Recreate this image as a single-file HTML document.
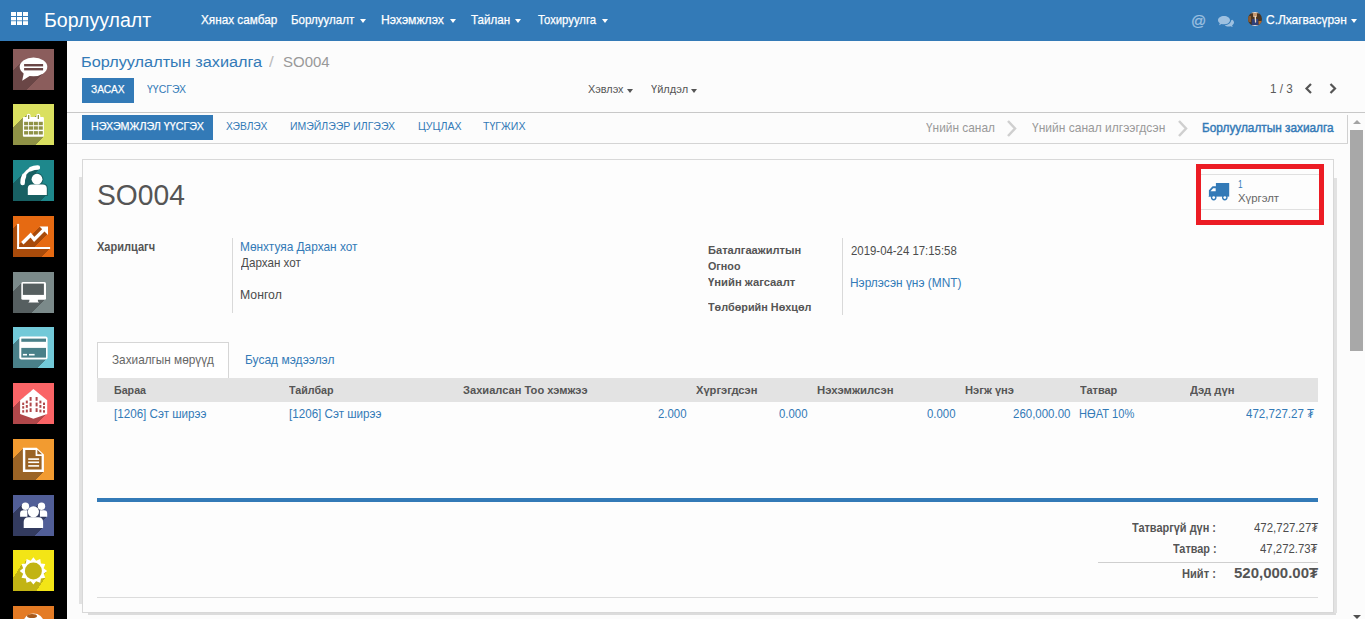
<!DOCTYPE html>
<html><head><meta charset="utf-8">
<style>
*{margin:0;padding:0;box-sizing:border-box}
html,body{width:1365px;height:619px;overflow:hidden;background:#fcfcfc;font-family:"Liberation Sans",sans-serif}
.a{position:absolute}
.t{position:absolute;white-space:nowrap;line-height:1;transform-origin:0 0;-webkit-text-stroke:0.25px currentColor}
#nav{left:0;top:0;width:1365px;height:41px;background:#337ab7}
#side{left:0;top:41px;width:67px;height:578px;background:#000}
.ic{position:absolute;left:13px;width:41px;height:41px;overflow:hidden}
.ic svg{position:absolute;left:0;top:0}
.caret{position:absolute;width:0;height:0;border-left:3.5px solid transparent;border-right:3.5px solid transparent;border-top:4px solid #fff}
.hl{position:absolute;height:1px;background:#cfcfcf}
.vl{position:absolute;width:1px;background:#d9d9d9}
</style></head><body>
<div class="a" id="nav"></div>
<div class="a" id="side"></div>

<!-- grid icon -->
<svg class="a" style="left:11px;top:12px" width="17" height="13" viewBox="0 0 17 13">
<g fill="#fff">
<rect x="0" y="0" width="5" height="4"/><rect x="6" y="0" width="5" height="4"/><rect x="12" y="0" width="5" height="4"/>
<rect x="0" y="5" width="5" height="3.4"/><rect x="6" y="5" width="5" height="3.4"/><rect x="12" y="5" width="5" height="3.4"/>
<rect x="0" y="9.2" width="5" height="3.8"/><rect x="6" y="9.2" width="5" height="3.8"/><rect x="12" y="9.2" width="5" height="3.8"/>
</g></svg>

<!-- nav carets -->
<div class="caret" style="left:360px;top:19px"></div>
<div class="caret" style="left:449.5px;top:19px"></div>
<div class="caret" style="left:514.5px;top:19px"></div>
<div class="caret" style="left:602px;top:19px"></div>
<div class="caret" style="left:1351px;top:19px"></div>

<!-- @ and chat -->
<div class="t" style="left:1191px;top:13px;font-size:15px;color:#9dc0e0">@</div>
<svg class="a" style="left:1218px;top:16px" width="16" height="11" viewBox="0 0 16 11">
<path fill="#9dc0e0" d="M6 0C2.7 0 0 1.8 0 4.2c0 1.2.7 2.2 1.8 3L1 9.3l2.6-1.4c.8.3 1.6.4 2.4.4 3.3 0 6-1.8 6-4.1S9.3 0 6 0z"/>
<path fill="#9dc0e0" d="M13 4.5c0 2.6-2.8 4.6-6.3 4.7.9.9 2.3 1.3 3.8 1.3.6 0 1.2-.1 1.8-.3L14.7 11l-.6-1.8c1.1-.6 1.9-1.6 1.9-2.7 0-1.1-.7-2-1.8-2.7z"/>
</svg>
<!-- avatar -->
<svg class="a" style="left:1248px;top:12px" width="14" height="14" viewBox="0 0 14 14">
<defs><clipPath id="av"><circle cx="7" cy="7" r="7"/></clipPath></defs>
<g clip-path="url(#av)"><rect width="14" height="14" fill="#4a3622"/>
<rect x="0" y="4" width="3" height="6" fill="#8a5a30"/><rect x="10.5" y="9" width="3.5" height="4" fill="#b86a28"/>
<rect x="3" y="0" width="8" height="1.2" fill="#e8e4e0"/>
<rect x="5" y="1" width="4" height="4" fill="#c89a70"/>
<path d="M3.5 14 L4 7 L10 7 L10.5 14Z" fill="#2f3f78"/>
<path d="M6.5 4 L8 4 L8.2 10 L7 11Z" fill="#e6d8c8"/>
<rect x="3" y="13" width="8" height="1" fill="#e0e0e0"/></g>
</svg>

<!-- control panel -->
<div class="a" style="left:82px;top:78px;width:52px;height:25px;background:#337ab7"></div>
<div class="caret" style="left:627px;top:88.5px;border-top-color:#555"></div>
<div class="caret" style="left:691px;top:88.5px;border-top-color:#555"></div>
<svg class="a" style="left:1304px;top:83px" width="34" height="11" viewBox="0 0 34 11">
<path d="M7 1 L2.5 5.5 L7 10" stroke="#555" stroke-width="2.2" fill="none"/>
<path d="M26.5 1 L31 5.5 L26.5 10" stroke="#555" stroke-width="2.2" fill="none"/>
</svg>
<div class="hl" style="left:67px;top:112px;width:1298px;background:#c8c8c8"></div>

<!-- statusbar -->
<div class="a" style="left:82px;top:115px;width:131px;height:25px;background:#337ab7"></div>
<svg class="a" style="left:1006px;top:120px" width="12" height="17" viewBox="0 0 12 17">
<path d="M2 1 L9 8.5 L2 16" stroke="#cfcfcf" stroke-width="2.5" fill="none"/></svg>
<svg class="a" style="left:1177px;top:120px" width="12" height="17" viewBox="0 0 12 17">
<path d="M2 1 L9 8.5 L2 16" stroke="#cfcfcf" stroke-width="2.5" fill="none"/></svg>
<div class="vl" style="left:1347px;top:115px;height:28px;background:#d0d0d0"></div>
<div class="hl" style="left:67px;top:143px;width:1281px;background:#d4d4d4"></div>

<!-- scrollbar -->
<div class="a" style="left:1348px;top:113px;width:17px;height:506px;background:#fcfcfc"></div>
<div class="a" style="left:1350px;top:130px;width:13px;height:221px;background:#a8a8a8"></div>
<div class="a" style="left:1353px;top:120px;width:0;height:0;border-left:4px solid transparent;border-right:4px solid transparent;border-bottom:4px solid #a3a3a3"></div>
<div class="a" style="left:1353px;top:615px;width:0;height:0;border-left:4px solid transparent;border-right:4px solid transparent;border-top:4px solid #505050"></div>

<!-- sheet -->
<div class="a" style="left:79px;top:177px;width:4px;height:427px;background:#e2e2e2"></div>
<div class="a" style="left:88px;top:612px;width:1248px;height:3px;background:#dcdcdc"></div>
<div class="a" style="left:1333px;top:178px;width:4px;height:435px;background:#e2e2e2"></div>
<div class="a" style="left:82px;top:159px;width:1252px;height:454px;background:#fdfdfd;border:1px solid #d8d8d8"></div>

<!-- smart button -->
<div class="hl" style="left:1201px;top:174px;width:118px;background:#e0e0e0"></div>
<div class="hl" style="left:1201px;top:209px;width:118px;background:#e0e0e0"></div>
<svg class="a" style="left:1208px;top:183px" width="22" height="18" viewBox="0 0 22 18">
<g fill="#337ab7">
<rect x="7.9" y="0" width="13.3" height="13.6"/>
<path d="M0.2 13.7 L0.9 13.2 L0.9 7.2 L4.6 3.3 L8.2 3.3 L8.2 13.7Z"/>
<circle cx="5.7" cy="14.6" r="2.8"/><circle cx="16.8" cy="14.6" r="2.8"/>
</g>
<circle cx="5.7" cy="14.6" r="1.4" fill="#fff"/><circle cx="16.8" cy="14.6" r="1.4" fill="#fff"/>
<path d="M2.5 8.2 L5.2 5.2 L7.7 5.2 L7.7 8.2Z" fill="#fff"/>
</svg>
<!-- red annotation -->
<div class="a" style="left:1196px;top:164px;width:128px;height:61px;border:5px solid #ec1c24"></div>

<!-- form separators -->
<div class="vl" style="left:232px;top:238px;height:75px"></div>
<div class="vl" style="left:842px;top:238px;height:77px"></div>

<!-- notebook -->
<div class="a" style="left:97px;top:342px;width:132px;height:36px;background:#fff;border:1px solid #d6d6d6;border-bottom:none"></div>
<div class="a" style="left:97px;top:378px;width:1221px;height:24px;background:#e3e3e3"></div>
<div class="a" style="left:97px;top:498px;width:1221px;height:4px;background:#337ab7"></div>
<div class="hl" style="left:1098px;top:562px;width:220px;background:#cfcfcf"></div>
<div class="hl" style="left:97px;top:597px;width:1221px;background:#dcdcdc"></div>

<!-- sidebar icons -->
<!--ICONS--><div class="ic" style="top:49px"><svg width="41" height="41" viewBox="0 0 41 41"><defs><g id="s0"><ellipse cx="20.5" cy="17.8" rx="13.8" ry="9.4"/><path d="M11 23 L9.2 31.7 L19 25.5Z"/></g></defs><rect width="41" height="41" fill="#8b5d5c"/><g fill="#6a4646" color="#6a4646" shape-rendering="crispEdges"><use href="#s0" x="-1.00" y="1"/><use href="#s0" x="-2.00" y="2"/><use href="#s0" x="-3.00" y="3"/><use href="#s0" x="-4.00" y="4"/><use href="#s0" x="-5.00" y="5"/><use href="#s0" x="-6.00" y="6"/><use href="#s0" x="-7.00" y="7"/><use href="#s0" x="-8.00" y="8"/><use href="#s0" x="-9.00" y="9"/><use href="#s0" x="-10.00" y="10"/><use href="#s0" x="-11.00" y="11"/><use href="#s0" x="-12.00" y="12"/><use href="#s0" x="-13.00" y="13"/><use href="#s0" x="-14.00" y="14"/><use href="#s0" x="-15.00" y="15"/><use href="#s0" x="-16.00" y="16"/><use href="#s0" x="-17.00" y="17"/><use href="#s0" x="-18.00" y="18"/><use href="#s0" x="-19.00" y="19"/><use href="#s0" x="-20.00" y="20"/><use href="#s0" x="-21.00" y="21"/><use href="#s0" x="-22.00" y="22"/><use href="#s0" x="-23.00" y="23"/><use href="#s0" x="-24.00" y="24"/><use href="#s0" x="-25.00" y="25"/><use href="#s0" x="-26.00" y="26"/><use href="#s0" x="-27.00" y="27"/><use href="#s0" x="-28.00" y="28"/><use href="#s0" x="-29.00" y="29"/><use href="#s0" x="-30.00" y="30"/><use href="#s0" x="-31.00" y="31"/><use href="#s0" x="-32.00" y="32"/><use href="#s0" x="-33.00" y="33"/><use href="#s0" x="-34.00" y="34"/><use href="#s0" x="-35.00" y="35"/><use href="#s0" x="-36.00" y="36"/><use href="#s0" x="-37.00" y="37"/><use href="#s0" x="-38.00" y="38"/><use href="#s0" x="-39.00" y="39"/><use href="#s0" x="-40.00" y="40"/><use href="#s0" x="-41.00" y="41"/></g><g fill="#fff" color="#fff"><ellipse cx="20.5" cy="17.8" rx="13.8" ry="9.4"/><path d="M11 23 L9.2 31.7 L19 25.5Z"/></g><g fill="#6a4646"><rect x="11.1" y="15" width="19" height="2.4"/><rect x="11.1" y="19" width="19" height="2.4"/></g><g fill="#fff"></g></svg></div>
<div class="ic" style="top:104px"><svg width="41" height="41" viewBox="0 0 41 41"><defs><g id="s1"><rect x="9.9" y="13" width="21" height="19.8" rx="1"/><rect x="13.6" y="9.7" width="4" height="6.1" rx="2"/><rect x="23.3" y="9.7" width="4" height="6.1" rx="2"/></g></defs><rect width="41" height="41" fill="#dae060"/><g fill="#8f9246" color="#8f9246" shape-rendering="crispEdges"><use href="#s1" x="-1.00" y="1"/><use href="#s1" x="-2.00" y="2"/><use href="#s1" x="-3.00" y="3"/><use href="#s1" x="-4.00" y="4"/><use href="#s1" x="-5.00" y="5"/><use href="#s1" x="-6.00" y="6"/><use href="#s1" x="-7.00" y="7"/><use href="#s1" x="-8.00" y="8"/><use href="#s1" x="-9.00" y="9"/><use href="#s1" x="-10.00" y="10"/><use href="#s1" x="-11.00" y="11"/><use href="#s1" x="-12.00" y="12"/><use href="#s1" x="-13.00" y="13"/><use href="#s1" x="-14.00" y="14"/><use href="#s1" x="-15.00" y="15"/><use href="#s1" x="-16.00" y="16"/><use href="#s1" x="-17.00" y="17"/><use href="#s1" x="-18.00" y="18"/><use href="#s1" x="-19.00" y="19"/><use href="#s1" x="-20.00" y="20"/><use href="#s1" x="-21.00" y="21"/><use href="#s1" x="-22.00" y="22"/><use href="#s1" x="-23.00" y="23"/><use href="#s1" x="-24.00" y="24"/><use href="#s1" x="-25.00" y="25"/><use href="#s1" x="-26.00" y="26"/><use href="#s1" x="-27.00" y="27"/><use href="#s1" x="-28.00" y="28"/><use href="#s1" x="-29.00" y="29"/><use href="#s1" x="-30.00" y="30"/><use href="#s1" x="-31.00" y="31"/><use href="#s1" x="-32.00" y="32"/><use href="#s1" x="-33.00" y="33"/><use href="#s1" x="-34.00" y="34"/><use href="#s1" x="-35.00" y="35"/><use href="#s1" x="-36.00" y="36"/><use href="#s1" x="-37.00" y="37"/><use href="#s1" x="-38.00" y="38"/><use href="#s1" x="-39.00" y="39"/><use href="#s1" x="-40.00" y="40"/><use href="#s1" x="-41.00" y="41"/></g><g fill="#fff" color="#fff"><rect x="9.9" y="13" width="21" height="19.8" rx="1"/><rect x="13.6" y="9.7" width="4" height="6.1" rx="2"/><rect x="23.3" y="9.7" width="4" height="6.1" rx="2"/></g><g fill="#8f9246"><rect x="11.1" y="17.8" width="4.1" height="3.4"/><rect x="11.1" y="22.3" width="4.1" height="3.4"/><rect x="11.1" y="27.1" width="4.1" height="3.4"/><rect x="16" y="17.8" width="4.1" height="3.4"/><rect x="16" y="22.3" width="4.1" height="3.4"/><rect x="16" y="27.1" width="4.1" height="3.4"/><rect x="20.8" y="17.8" width="4.1" height="3.4"/><rect x="20.8" y="22.3" width="4.1" height="3.4"/><rect x="20.8" y="27.1" width="4.1" height="3.4"/><rect x="25.7" y="17.8" width="4.1" height="3.4"/><rect x="25.7" y="22.3" width="4.1" height="3.4"/><rect x="25.7" y="27.1" width="4.1" height="3.4"/><rect x="15" y="11" width="1.3" height="4"/><rect x="24.7" y="11" width="1.3" height="4"/></g><g fill="#fff"></g></svg></div>
<div class="ic" style="top:160px"><svg width="41" height="41" viewBox="0 0 41 41"><defs><g id="s2"><g fill="none" stroke="currentColor" stroke-linecap="round"><path d="M9.7 22 A14.3 14.3 0 0 1 25.25 7.75" stroke-width="3"/><path d="M9.6 23 A14.3 14.3 0 0 1 11.04 15.96" stroke-width="4.6"/><path d="M17.96 9.04 A14.3 14.3 0 0 1 24.8 7.5" stroke-width="4.6"/></g><circle cx="24" cy="19.2" r="5.4"/><path d="M14.8 35 L14.8 28.5 Q14.8 24.5 19 24.5 L29.6 24.5 Q33.8 24.5 33.8 28.5 L33.8 35Z"/></g></defs><rect width="41" height="41" fill="#1e888c"/><g fill="#186063" color="#186063" shape-rendering="crispEdges"><use href="#s2" x="-1.00" y="1"/><use href="#s2" x="-2.00" y="2"/><use href="#s2" x="-3.00" y="3"/><use href="#s2" x="-4.00" y="4"/><use href="#s2" x="-5.00" y="5"/><use href="#s2" x="-6.00" y="6"/><use href="#s2" x="-7.00" y="7"/><use href="#s2" x="-8.00" y="8"/><use href="#s2" x="-9.00" y="9"/><use href="#s2" x="-10.00" y="10"/><use href="#s2" x="-11.00" y="11"/><use href="#s2" x="-12.00" y="12"/><use href="#s2" x="-13.00" y="13"/><use href="#s2" x="-14.00" y="14"/><use href="#s2" x="-15.00" y="15"/><use href="#s2" x="-16.00" y="16"/><use href="#s2" x="-17.00" y="17"/><use href="#s2" x="-18.00" y="18"/><use href="#s2" x="-19.00" y="19"/><use href="#s2" x="-20.00" y="20"/><use href="#s2" x="-21.00" y="21"/><use href="#s2" x="-22.00" y="22"/><use href="#s2" x="-23.00" y="23"/><use href="#s2" x="-24.00" y="24"/><use href="#s2" x="-25.00" y="25"/><use href="#s2" x="-26.00" y="26"/><use href="#s2" x="-27.00" y="27"/><use href="#s2" x="-28.00" y="28"/><use href="#s2" x="-29.00" y="29"/><use href="#s2" x="-30.00" y="30"/><use href="#s2" x="-31.00" y="31"/><use href="#s2" x="-32.00" y="32"/><use href="#s2" x="-33.00" y="33"/><use href="#s2" x="-34.00" y="34"/><use href="#s2" x="-35.00" y="35"/><use href="#s2" x="-36.00" y="36"/><use href="#s2" x="-37.00" y="37"/><use href="#s2" x="-38.00" y="38"/><use href="#s2" x="-39.00" y="39"/><use href="#s2" x="-40.00" y="40"/><use href="#s2" x="-41.00" y="41"/></g><g fill="#fff" color="#fff"><g fill="none" stroke="currentColor" stroke-linecap="round"><path d="M9.7 22 A14.3 14.3 0 0 1 25.25 7.75" stroke-width="3"/><path d="M9.6 23 A14.3 14.3 0 0 1 11.04 15.96" stroke-width="4.6"/><path d="M17.96 9.04 A14.3 14.3 0 0 1 24.8 7.5" stroke-width="4.6"/></g><circle cx="24" cy="19.2" r="5.4"/><path d="M14.8 35 L14.8 28.5 Q14.8 24.5 19 24.5 L29.6 24.5 Q33.8 24.5 33.8 28.5 L33.8 35Z"/></g><g fill="#186063"><circle cx="24" cy="19.2" r="6.4"/><path d="M13.8 36 L13.8 28.5 Q13.8 23.5 19 23.5 L29.6 23.5 Q34.8 23.5 34.8 28.5 L34.8 36Z"/></g><g fill="#fff"><circle cx="24" cy="19.2" r="5.4"/><path d="M14.8 35 L14.8 28.5 Q14.8 24.5 19 24.5 L29.6 24.5 Q33.8 24.5 33.8 28.5 L33.8 35Z"/></g></svg></div>
<div class="ic" style="top:216px"><svg width="41" height="41" viewBox="0 0 41 41"><defs><g id="s3"><rect x="4.1" y="7.9" width="2" height="25.1"/><rect x="4.1" y="31" width="33" height="2"/><path d="M9.3 27.3 L17.6 19 L21.2 23.4 L31.5 13.1" stroke="currentColor" stroke-width="3.4" fill="none"/><path d="M26.5 10.4 L35 10.4 L35 18.9Z"/></g></defs><rect width="41" height="41" fill="#e66a12"/><g fill="#a84b0b" color="#a84b0b" shape-rendering="crispEdges"><use href="#s3" x="-1.00" y="1"/><use href="#s3" x="-2.00" y="2"/><use href="#s3" x="-3.00" y="3"/><use href="#s3" x="-4.00" y="4"/><use href="#s3" x="-5.00" y="5"/><use href="#s3" x="-6.00" y="6"/><use href="#s3" x="-7.00" y="7"/><use href="#s3" x="-8.00" y="8"/><use href="#s3" x="-9.00" y="9"/><use href="#s3" x="-10.00" y="10"/><use href="#s3" x="-11.00" y="11"/><use href="#s3" x="-12.00" y="12"/><use href="#s3" x="-13.00" y="13"/><use href="#s3" x="-14.00" y="14"/><use href="#s3" x="-15.00" y="15"/><use href="#s3" x="-16.00" y="16"/><use href="#s3" x="-17.00" y="17"/><use href="#s3" x="-18.00" y="18"/><use href="#s3" x="-19.00" y="19"/><use href="#s3" x="-20.00" y="20"/><use href="#s3" x="-21.00" y="21"/><use href="#s3" x="-22.00" y="22"/><use href="#s3" x="-23.00" y="23"/><use href="#s3" x="-24.00" y="24"/><use href="#s3" x="-25.00" y="25"/><use href="#s3" x="-26.00" y="26"/><use href="#s3" x="-27.00" y="27"/><use href="#s3" x="-28.00" y="28"/><use href="#s3" x="-29.00" y="29"/><use href="#s3" x="-30.00" y="30"/><use href="#s3" x="-31.00" y="31"/><use href="#s3" x="-32.00" y="32"/><use href="#s3" x="-33.00" y="33"/><use href="#s3" x="-34.00" y="34"/><use href="#s3" x="-35.00" y="35"/><use href="#s3" x="-36.00" y="36"/><use href="#s3" x="-37.00" y="37"/><use href="#s3" x="-38.00" y="38"/><use href="#s3" x="-39.00" y="39"/><use href="#s3" x="-40.00" y="40"/><use href="#s3" x="-41.00" y="41"/></g><g fill="#fff" color="#fff"><rect x="4.1" y="7.9" width="2" height="25.1"/><rect x="4.1" y="31" width="33" height="2"/><path d="M9.3 27.3 L17.6 19 L21.2 23.4 L31.5 13.1" stroke="currentColor" stroke-width="3.4" fill="none"/><path d="M26.5 10.4 L35 10.4 L35 18.9Z"/></g><g fill="#a84b0b"></g><g fill="#fff"></g></svg></div>
<div class="ic" style="top:272px"><svg width="41" height="41" viewBox="0 0 41 41"><defs><g id="s4"><rect x="8.3" y="10" width="24.7" height="17.7" rx="1.5"/><path d="M16.4 27 L24.9 27 L24.9 29.3 L26 30.6 L15.3 30.6 L16.4 29.3Z"/></g></defs><rect width="41" height="41" fill="#7b8a8a"/><g fill="#565f60" color="#565f60" shape-rendering="crispEdges"><use href="#s4" x="-1.00" y="1"/><use href="#s4" x="-2.00" y="2"/><use href="#s4" x="-3.00" y="3"/><use href="#s4" x="-4.00" y="4"/><use href="#s4" x="-5.00" y="5"/><use href="#s4" x="-6.00" y="6"/><use href="#s4" x="-7.00" y="7"/><use href="#s4" x="-8.00" y="8"/><use href="#s4" x="-9.00" y="9"/><use href="#s4" x="-10.00" y="10"/><use href="#s4" x="-11.00" y="11"/><use href="#s4" x="-12.00" y="12"/><use href="#s4" x="-13.00" y="13"/><use href="#s4" x="-14.00" y="14"/><use href="#s4" x="-15.00" y="15"/><use href="#s4" x="-16.00" y="16"/><use href="#s4" x="-17.00" y="17"/><use href="#s4" x="-18.00" y="18"/><use href="#s4" x="-19.00" y="19"/><use href="#s4" x="-20.00" y="20"/><use href="#s4" x="-21.00" y="21"/><use href="#s4" x="-22.00" y="22"/><use href="#s4" x="-23.00" y="23"/><use href="#s4" x="-24.00" y="24"/><use href="#s4" x="-25.00" y="25"/><use href="#s4" x="-26.00" y="26"/><use href="#s4" x="-27.00" y="27"/><use href="#s4" x="-28.00" y="28"/><use href="#s4" x="-29.00" y="29"/><use href="#s4" x="-30.00" y="30"/><use href="#s4" x="-31.00" y="31"/><use href="#s4" x="-32.00" y="32"/><use href="#s4" x="-33.00" y="33"/><use href="#s4" x="-34.00" y="34"/><use href="#s4" x="-35.00" y="35"/><use href="#s4" x="-36.00" y="36"/><use href="#s4" x="-37.00" y="37"/><use href="#s4" x="-38.00" y="38"/><use href="#s4" x="-39.00" y="39"/><use href="#s4" x="-40.00" y="40"/><use href="#s4" x="-41.00" y="41"/></g><g fill="#fff" color="#fff"><rect x="8.3" y="10" width="24.7" height="17.7" rx="1.5"/><path d="M16.4 27 L24.9 27 L24.9 29.3 L26 30.6 L15.3 30.6 L16.4 29.3Z"/></g><g fill="#565f60"><rect x="9.9" y="11.6" width="21" height="11.3"/></g><g fill="#fff"></g></svg></div>
<div class="ic" style="top:327px"><svg width="41" height="41" viewBox="0 0 41 41"><defs><g id="s5"><rect x="6.3" y="9.5" width="28.3" height="23.1" rx="2"/></g></defs><rect width="41" height="41" fill="#72c9d8"/><g fill="#4a8089" color="#4a8089" shape-rendering="crispEdges"><use href="#s5" x="-1.00" y="1"/><use href="#s5" x="-2.00" y="2"/><use href="#s5" x="-3.00" y="3"/><use href="#s5" x="-4.00" y="4"/><use href="#s5" x="-5.00" y="5"/><use href="#s5" x="-6.00" y="6"/><use href="#s5" x="-7.00" y="7"/><use href="#s5" x="-8.00" y="8"/><use href="#s5" x="-9.00" y="9"/><use href="#s5" x="-10.00" y="10"/><use href="#s5" x="-11.00" y="11"/><use href="#s5" x="-12.00" y="12"/><use href="#s5" x="-13.00" y="13"/><use href="#s5" x="-14.00" y="14"/><use href="#s5" x="-15.00" y="15"/><use href="#s5" x="-16.00" y="16"/><use href="#s5" x="-17.00" y="17"/><use href="#s5" x="-18.00" y="18"/><use href="#s5" x="-19.00" y="19"/><use href="#s5" x="-20.00" y="20"/><use href="#s5" x="-21.00" y="21"/><use href="#s5" x="-22.00" y="22"/><use href="#s5" x="-23.00" y="23"/><use href="#s5" x="-24.00" y="24"/><use href="#s5" x="-25.00" y="25"/><use href="#s5" x="-26.00" y="26"/><use href="#s5" x="-27.00" y="27"/><use href="#s5" x="-28.00" y="28"/><use href="#s5" x="-29.00" y="29"/><use href="#s5" x="-30.00" y="30"/><use href="#s5" x="-31.00" y="31"/><use href="#s5" x="-32.00" y="32"/><use href="#s5" x="-33.00" y="33"/><use href="#s5" x="-34.00" y="34"/><use href="#s5" x="-35.00" y="35"/><use href="#s5" x="-36.00" y="36"/><use href="#s5" x="-37.00" y="37"/><use href="#s5" x="-38.00" y="38"/><use href="#s5" x="-39.00" y="39"/><use href="#s5" x="-40.00" y="40"/><use href="#s5" x="-41.00" y="41"/></g><g fill="#fff" color="#fff"><rect x="6.3" y="9.5" width="28.3" height="23.1" rx="2"/></g><g fill="#4a8089"><rect x="8.3" y="11.6" width="24.7" height="3.2"/><rect x="8.3" y="20.9" width="24.7" height="9.7"/></g><g fill="#fff"><rect x="9.9" y="26.9" width="4.1" height="1.6"/><rect x="16" y="26.9" width="5.6" height="1.6"/></g></svg></div>
<div class="ic" style="top:383px"><svg width="41" height="41" viewBox="0 0 41 41"><defs><g id="s6"><path d="M20.4 5.9 L34.2 17.2 L34.2 31 L20.4 35.8 L7.1 31 L7.1 17.2Z"/></g></defs><rect width="41" height="41" fill="#fa6466"/><g fill="#b0474a" color="#b0474a" shape-rendering="crispEdges"><use href="#s6" x="-1.00" y="1"/><use href="#s6" x="-2.00" y="2"/><use href="#s6" x="-3.00" y="3"/><use href="#s6" x="-4.00" y="4"/><use href="#s6" x="-5.00" y="5"/><use href="#s6" x="-6.00" y="6"/><use href="#s6" x="-7.00" y="7"/><use href="#s6" x="-8.00" y="8"/><use href="#s6" x="-9.00" y="9"/><use href="#s6" x="-10.00" y="10"/><use href="#s6" x="-11.00" y="11"/><use href="#s6" x="-12.00" y="12"/><use href="#s6" x="-13.00" y="13"/><use href="#s6" x="-14.00" y="14"/><use href="#s6" x="-15.00" y="15"/><use href="#s6" x="-16.00" y="16"/><use href="#s6" x="-17.00" y="17"/><use href="#s6" x="-18.00" y="18"/><use href="#s6" x="-19.00" y="19"/><use href="#s6" x="-20.00" y="20"/><use href="#s6" x="-21.00" y="21"/><use href="#s6" x="-22.00" y="22"/><use href="#s6" x="-23.00" y="23"/><use href="#s6" x="-24.00" y="24"/><use href="#s6" x="-25.00" y="25"/><use href="#s6" x="-26.00" y="26"/><use href="#s6" x="-27.00" y="27"/><use href="#s6" x="-28.00" y="28"/><use href="#s6" x="-29.00" y="29"/><use href="#s6" x="-30.00" y="30"/><use href="#s6" x="-31.00" y="31"/><use href="#s6" x="-32.00" y="32"/><use href="#s6" x="-33.00" y="33"/><use href="#s6" x="-34.00" y="34"/><use href="#s6" x="-35.00" y="35"/><use href="#s6" x="-36.00" y="36"/><use href="#s6" x="-37.00" y="37"/><use href="#s6" x="-38.00" y="38"/><use href="#s6" x="-39.00" y="39"/><use href="#s6" x="-40.00" y="40"/><use href="#s6" x="-41.00" y="41"/></g><g fill="#fff" color="#fff"><path d="M20.4 5.9 L34.2 17.2 L34.2 31 L20.4 35.8 L7.1 31 L7.1 17.2Z"/></g><g fill="#b0474a"><rect x="9.2" y="19.6" width="2" height="2.4"/><rect x="9.2" y="23.2" width="2" height="2.4"/><rect x="9.2" y="27.2" width="2" height="2.4"/><rect x="12.8" y="17.6" width="2" height="2.8"/><rect x="12.8" y="22" width="2" height="2.8"/><rect x="12.8" y="26.6" width="2" height="2.8"/><rect x="16.6" y="14" width="2" height="3.8"/><rect x="16.6" y="19.6" width="2" height="3.8"/><rect x="16.6" y="25.2" width="2" height="3.8"/><rect x="22.6" y="14" width="2" height="3.8"/><rect x="22.6" y="19.6" width="2" height="3.8"/><rect x="22.6" y="25.2" width="2" height="3.8"/><rect x="26.4" y="17.6" width="2" height="2.8"/><rect x="26.4" y="22" width="2" height="2.8"/><rect x="26.4" y="26.6" width="2" height="2.8"/><rect x="30" y="19.6" width="2" height="2.4"/><rect x="30" y="23.2" width="2" height="2.4"/><rect x="30" y="27.2" width="2" height="2.4"/></g><g fill="#fff"></g></svg></div>
<div class="ic" style="top:439px"><svg width="41" height="41" viewBox="0 0 41 41"><defs><g id="s7"><path d="M9.9 8.7 L23.7 8.7 L30.9 15.5 L30.9 33 L9.9 33Z"/></g></defs><rect width="41" height="41" fill="#f29b30"/><g fill="#9a6325" color="#9a6325" shape-rendering="crispEdges"><use href="#s7" x="-1.00" y="1"/><use href="#s7" x="-2.00" y="2"/><use href="#s7" x="-3.00" y="3"/><use href="#s7" x="-4.00" y="4"/><use href="#s7" x="-5.00" y="5"/><use href="#s7" x="-6.00" y="6"/><use href="#s7" x="-7.00" y="7"/><use href="#s7" x="-8.00" y="8"/><use href="#s7" x="-9.00" y="9"/><use href="#s7" x="-10.00" y="10"/><use href="#s7" x="-11.00" y="11"/><use href="#s7" x="-12.00" y="12"/><use href="#s7" x="-13.00" y="13"/><use href="#s7" x="-14.00" y="14"/><use href="#s7" x="-15.00" y="15"/><use href="#s7" x="-16.00" y="16"/><use href="#s7" x="-17.00" y="17"/><use href="#s7" x="-18.00" y="18"/><use href="#s7" x="-19.00" y="19"/><use href="#s7" x="-20.00" y="20"/><use href="#s7" x="-21.00" y="21"/><use href="#s7" x="-22.00" y="22"/><use href="#s7" x="-23.00" y="23"/><use href="#s7" x="-24.00" y="24"/><use href="#s7" x="-25.00" y="25"/><use href="#s7" x="-26.00" y="26"/><use href="#s7" x="-27.00" y="27"/><use href="#s7" x="-28.00" y="28"/><use href="#s7" x="-29.00" y="29"/><use href="#s7" x="-30.00" y="30"/><use href="#s7" x="-31.00" y="31"/><use href="#s7" x="-32.00" y="32"/><use href="#s7" x="-33.00" y="33"/><use href="#s7" x="-34.00" y="34"/><use href="#s7" x="-35.00" y="35"/><use href="#s7" x="-36.00" y="36"/><use href="#s7" x="-37.00" y="37"/><use href="#s7" x="-38.00" y="38"/><use href="#s7" x="-39.00" y="39"/><use href="#s7" x="-40.00" y="40"/><use href="#s7" x="-41.00" y="41"/></g><g fill="#fff" color="#fff"><path d="M9.9 8.7 L23.7 8.7 L30.9 15.5 L30.9 33 L9.9 33Z"/></g><g fill="#9a6325"><path d="M12.3 11 L22.6 11 L22.6 17 L28.6 17 L28.6 30.6 L12.3 30.6Z"/><path d="M24.3 10.8 L24.3 15.3 L29 15.3Z"/></g><g fill="#fff"><rect x="15.2" y="19.3" width="10.9" height="1.6"/><rect x="15.2" y="22.5" width="10.9" height="1.6"/><rect x="15.2" y="26.1" width="10.9" height="1.6"/></g></svg></div>
<div class="ic" style="top:495px"><svg width="41" height="41" viewBox="0 0 41 41"><defs><g id="s8"><circle cx="12.4" cy="11.2" r="3.7"/><circle cx="28.5" cy="11.2" r="3.7"/><path d="M7.1 21.7 L7.1 18.5 Q7.1 15.2 10.5 15.2 L14.4 15.2 L14.4 21.7Z"/><path d="M26.9 15.2 L30.8 15.2 Q34.2 15.2 34.2 18.5 L34.2 21.7 L26.9 21.7Z"/><circle cx="20.4" cy="16.8" r="5.6"/><path d="M10.7 33 L10.7 27 Q10.7 22.3 15.5 22.3 L25.3 22.3 Q30.1 22.3 30.1 27 L30.1 33Z"/></g></defs><rect width="41" height="41" fill="#515e97"/><g fill="#333b5f" color="#333b5f" shape-rendering="crispEdges"><use href="#s8" x="-1.00" y="1"/><use href="#s8" x="-2.00" y="2"/><use href="#s8" x="-3.00" y="3"/><use href="#s8" x="-4.00" y="4"/><use href="#s8" x="-5.00" y="5"/><use href="#s8" x="-6.00" y="6"/><use href="#s8" x="-7.00" y="7"/><use href="#s8" x="-8.00" y="8"/><use href="#s8" x="-9.00" y="9"/><use href="#s8" x="-10.00" y="10"/><use href="#s8" x="-11.00" y="11"/><use href="#s8" x="-12.00" y="12"/><use href="#s8" x="-13.00" y="13"/><use href="#s8" x="-14.00" y="14"/><use href="#s8" x="-15.00" y="15"/><use href="#s8" x="-16.00" y="16"/><use href="#s8" x="-17.00" y="17"/><use href="#s8" x="-18.00" y="18"/><use href="#s8" x="-19.00" y="19"/><use href="#s8" x="-20.00" y="20"/><use href="#s8" x="-21.00" y="21"/><use href="#s8" x="-22.00" y="22"/><use href="#s8" x="-23.00" y="23"/><use href="#s8" x="-24.00" y="24"/><use href="#s8" x="-25.00" y="25"/><use href="#s8" x="-26.00" y="26"/><use href="#s8" x="-27.00" y="27"/><use href="#s8" x="-28.00" y="28"/><use href="#s8" x="-29.00" y="29"/><use href="#s8" x="-30.00" y="30"/><use href="#s8" x="-31.00" y="31"/><use href="#s8" x="-32.00" y="32"/><use href="#s8" x="-33.00" y="33"/><use href="#s8" x="-34.00" y="34"/><use href="#s8" x="-35.00" y="35"/><use href="#s8" x="-36.00" y="36"/><use href="#s8" x="-37.00" y="37"/><use href="#s8" x="-38.00" y="38"/><use href="#s8" x="-39.00" y="39"/><use href="#s8" x="-40.00" y="40"/><use href="#s8" x="-41.00" y="41"/></g><g fill="#fff" color="#fff"><circle cx="12.4" cy="11.2" r="3.7"/><circle cx="28.5" cy="11.2" r="3.7"/><path d="M7.1 21.7 L7.1 18.5 Q7.1 15.2 10.5 15.2 L14.4 15.2 L14.4 21.7Z"/><path d="M26.9 15.2 L30.8 15.2 Q34.2 15.2 34.2 18.5 L34.2 21.7 L26.9 21.7Z"/><circle cx="20.4" cy="16.8" r="5.6"/><path d="M10.7 33 L10.7 27 Q10.7 22.3 15.5 22.3 L25.3 22.3 Q30.1 22.3 30.1 27 L30.1 33Z"/></g><g fill="#333b5f"></g><g fill="#fff"></g></svg></div>
<div class="ic" style="top:550px"><svg width="41" height="41" viewBox="0 0 41 41"><defs><g id="s9"><path d="M20.40,7.20 L23.14,10.66 L27.25,9.04 L27.90,13.40 L32.26,14.05 L30.64,18.16 L34.10,20.90 L30.64,23.64 L32.26,27.75 L27.90,28.40 L27.25,32.76 L23.14,31.14 L20.40,34.60 L17.66,31.14 L13.55,32.76 L12.90,28.40 L8.54,27.75 L10.16,23.64 L6.70,20.90 L10.16,18.16 L8.54,14.05 L12.90,13.40 L13.55,9.04 L17.66,10.66Z"/></g></defs><rect width="41" height="41" fill="#f3e516"/><g fill="#c2b414" color="#c2b414" shape-rendering="crispEdges"><use href="#s9" x="-0.65" y="1"/><use href="#s9" x="-1.30" y="2"/><use href="#s9" x="-1.95" y="3"/><use href="#s9" x="-2.60" y="4"/><use href="#s9" x="-3.25" y="5"/><use href="#s9" x="-3.90" y="6"/><use href="#s9" x="-4.55" y="7"/><use href="#s9" x="-5.20" y="8"/><use href="#s9" x="-5.85" y="9"/><use href="#s9" x="-6.50" y="10"/><use href="#s9" x="-7.15" y="11"/><use href="#s9" x="-7.80" y="12"/><use href="#s9" x="-8.45" y="13"/><use href="#s9" x="-9.10" y="14"/><use href="#s9" x="-9.75" y="15"/><use href="#s9" x="-10.40" y="16"/><use href="#s9" x="-11.05" y="17"/><use href="#s9" x="-11.70" y="18"/><use href="#s9" x="-12.35" y="19"/><use href="#s9" x="-13.00" y="20"/><use href="#s9" x="-13.65" y="21"/><use href="#s9" x="-14.30" y="22"/><use href="#s9" x="-14.95" y="23"/><use href="#s9" x="-15.60" y="24"/><use href="#s9" x="-16.25" y="25"/><use href="#s9" x="-16.90" y="26"/><use href="#s9" x="-17.55" y="27"/><use href="#s9" x="-18.20" y="28"/><use href="#s9" x="-18.85" y="29"/><use href="#s9" x="-19.50" y="30"/><use href="#s9" x="-20.15" y="31"/><use href="#s9" x="-20.80" y="32"/><use href="#s9" x="-21.45" y="33"/><use href="#s9" x="-22.10" y="34"/><use href="#s9" x="-22.75" y="35"/><use href="#s9" x="-23.40" y="36"/><use href="#s9" x="-24.05" y="37"/><use href="#s9" x="-24.70" y="38"/><use href="#s9" x="-25.35" y="39"/><use href="#s9" x="-26.00" y="40"/><use href="#s9" x="-26.65" y="41"/></g><g fill="#fff" color="#fff"><path d="M20.40,7.20 L23.14,10.66 L27.25,9.04 L27.90,13.40 L32.26,14.05 L30.64,18.16 L34.10,20.90 L30.64,23.64 L32.26,27.75 L27.90,28.40 L27.25,32.76 L23.14,31.14 L20.40,34.60 L17.66,31.14 L13.55,32.76 L12.90,28.40 L8.54,27.75 L10.16,23.64 L6.70,20.90 L10.16,18.16 L8.54,14.05 L12.90,13.40 L13.55,9.04 L17.66,10.66Z"/></g><g fill="#c2b414"><circle cx="20.4" cy="20.9" r="8.5"/></g><g fill="#fff"></g></svg></div>
<div class="ic" style="top:606px"><svg width="41" height="41" viewBox="0 0 41 41"><defs><g id="s10"><ellipse cx="20.5" cy="16" rx="10" ry="8.5"/></g></defs><rect width="41" height="41" fill="#e47b25"/><g fill="#a85a1b" color="#a85a1b" shape-rendering="crispEdges"><use href="#s10" x="-1.00" y="1"/><use href="#s10" x="-2.00" y="2"/><use href="#s10" x="-3.00" y="3"/><use href="#s10" x="-4.00" y="4"/><use href="#s10" x="-5.00" y="5"/><use href="#s10" x="-6.00" y="6"/><use href="#s10" x="-7.00" y="7"/><use href="#s10" x="-8.00" y="8"/><use href="#s10" x="-9.00" y="9"/><use href="#s10" x="-10.00" y="10"/><use href="#s10" x="-11.00" y="11"/><use href="#s10" x="-12.00" y="12"/><use href="#s10" x="-13.00" y="13"/><use href="#s10" x="-14.00" y="14"/><use href="#s10" x="-15.00" y="15"/><use href="#s10" x="-16.00" y="16"/><use href="#s10" x="-17.00" y="17"/><use href="#s10" x="-18.00" y="18"/><use href="#s10" x="-19.00" y="19"/><use href="#s10" x="-20.00" y="20"/><use href="#s10" x="-21.00" y="21"/><use href="#s10" x="-22.00" y="22"/><use href="#s10" x="-23.00" y="23"/><use href="#s10" x="-24.00" y="24"/><use href="#s10" x="-25.00" y="25"/><use href="#s10" x="-26.00" y="26"/><use href="#s10" x="-27.00" y="27"/><use href="#s10" x="-28.00" y="28"/><use href="#s10" x="-29.00" y="29"/><use href="#s10" x="-30.00" y="30"/><use href="#s10" x="-31.00" y="31"/><use href="#s10" x="-32.00" y="32"/><use href="#s10" x="-33.00" y="33"/><use href="#s10" x="-34.00" y="34"/><use href="#s10" x="-35.00" y="35"/><use href="#s10" x="-36.00" y="36"/><use href="#s10" x="-37.00" y="37"/><use href="#s10" x="-38.00" y="38"/><use href="#s10" x="-39.00" y="39"/><use href="#s10" x="-40.00" y="40"/><use href="#s10" x="-41.00" y="41"/></g><g fill="#fff" color="#fff"><ellipse cx="20.5" cy="16" rx="10" ry="8.5"/></g><g fill="#a85a1b"><ellipse cx="19" cy="10" rx="5" ry="2"/></g><g fill="#fff"></g></svg></div><!--/ICONS-->

<div class="t" id="t0" style="left:43.60px;top:10.81px;font-size:19.5px;font-weight:400;color:#fff;transform:scaleX(1.0040);-webkit-text-stroke:0">Борлуулалт</div>
<div class="t" id="t1" style="left:200.80px;top:13.01px;font-size:13.2px;font-weight:400;color:#fff;transform:scaleX(0.8904)">Хянах самбар</div>
<div class="t" id="t2" style="left:290.72px;top:13.01px;font-size:13.2px;font-weight:400;color:#fff;transform:scaleX(0.8766)">Борлуулалт</div>
<div class="t" id="t3" style="left:380.98px;top:13.01px;font-size:13.2px;font-weight:400;color:#fff;transform:scaleX(0.9217)">Нэхэмжлэх</div>
<div class="t" id="t4" style="left:470.70px;top:13.01px;font-size:13.2px;font-weight:400;color:#fff;transform:scaleX(0.8802)">Тайлан</div>
<div class="t" id="t5" style="left:537.60px;top:13.01px;font-size:13.2px;font-weight:400;color:#fff;transform:scaleX(0.8559)">Тохируулга</div>
<div class="t" id="t6" style="left:1265.70px;top:13.11px;font-size:13.2px;font-weight:400;color:#fff;transform:scaleX(0.9058)">С.Лхагвасүрэн</div>
<div class="t" id="t7" style="left:81.45px;top:54.21px;font-size:15.5px;font-weight:400;color:#337ab7;transform:scaleX(1.0493);-webkit-text-stroke:0">Борлуулалтын захиалга</div>
<div class="t" id="t8" style="left:268.50px;top:54.21px;font-size:15.5px;font-weight:400;color:#bbb;transform:scaleX(1.1000);-webkit-text-stroke:0">/</div>
<div class="t" id="t9" style="left:283.00px;top:54.21px;font-size:15.5px;font-weight:400;color:#999;transform:scaleX(0.9664);-webkit-text-stroke:0">SO004</div>
<div class="t" id="t10" style="left:91.00px;top:83.02px;font-size:11.6px;font-weight:400;color:#fff;transform:scaleX(0.8818)">ЗАСАХ</div>
<div class="t" id="t11" style="left:147.00px;top:83.02px;font-size:11.6px;font-weight:400;color:#337ab7;transform:scaleX(0.9038);-webkit-text-stroke:0">ҮҮСГЭХ</div>
<div class="t" id="t12" style="left:588.00px;top:83.91px;font-size:11.2px;font-weight:400;color:#555;transform:scaleX(0.9711);-webkit-text-stroke:0">Хэвлэх</div>
<div class="t" id="t13" style="left:651.20px;top:83.91px;font-size:11.2px;font-weight:400;color:#555;transform:scaleX(0.9861);-webkit-text-stroke:0">Үйлдэл</div>
<div class="t" id="t14" style="left:1269.80px;top:82.01px;font-size:13.0px;font-weight:400;color:#5a5a5a;transform:scaleX(0.8977);-webkit-text-stroke:0">1 / 3</div>
<div class="t" id="t15" style="left:91.00px;top:120.02px;font-size:11.6px;font-weight:400;color:#fff;transform:scaleX(0.9255)">НЭХЭМЖЛЭЛ ҮҮСГЭХ</div>
<div class="t" id="t16" style="left:225.90px;top:120.02px;font-size:11.6px;font-weight:400;color:#337ab7;transform:scaleX(0.8864);-webkit-text-stroke:0">ХЭВЛЭХ</div>
<div class="t" id="t17" style="left:289.90px;top:120.02px;font-size:11.6px;font-weight:400;color:#337ab7;transform:scaleX(0.9048);-webkit-text-stroke:0">ИМЭЙЛЭЭР ИЛГЭЭХ</div>
<div class="t" id="t18" style="left:417.50px;top:120.02px;font-size:11.6px;font-weight:400;color:#337ab7;transform:scaleX(0.9152);-webkit-text-stroke:0">ЦУЦЛАХ</div>
<div class="t" id="t19" style="left:483.40px;top:120.02px;font-size:11.6px;font-weight:400;color:#337ab7;transform:scaleX(0.9115);-webkit-text-stroke:0">ТҮГЖИХ</div>
<div class="t" id="t20" style="left:925.60px;top:122.10px;font-size:12.8px;font-weight:400;color:#999;transform:scaleX(0.9282);-webkit-text-stroke:0">Үнийн санал</div>
<div class="t" id="t21" style="left:1032.00px;top:122.10px;font-size:12.8px;font-weight:400;color:#999;transform:scaleX(0.9394);-webkit-text-stroke:0">Үнийн санал илгээгдсэн</div>
<div class="t" id="t22" style="left:1201.98px;top:122.10px;font-size:12.8px;font-weight:500;color:#337ab7;transform:scaleX(0.9234);-webkit-text-stroke:0.45px">Борлуулалтын захиалга</div>
<div class="t" id="t23" style="left:97.04px;top:179.61px;font-size:29.5px;font-weight:400;color:#555;transform:scaleX(0.9565);-webkit-text-stroke:0">SO004</div>
<div class="t" id="t24" style="left:1238.20px;top:179.11px;font-size:11.5px;font-weight:400;color:#337ab7;transform:scaleX(0.7167);-webkit-text-stroke:0">1</div>
<div class="t" id="t25" style="left:1238.20px;top:192.61px;font-size:11.5px;font-weight:400;color:#666;transform:scaleX(0.9873);-webkit-text-stroke:0">Хүргэлт</div>
<div class="t" id="t26" style="left:97.00px;top:240.51px;font-size:12.3px;font-weight:700;color:#555;transform:scaleX(0.8979);-webkit-text-stroke:0">Харилцагч</div>
<div class="t" id="t27" style="left:240.03px;top:241.20px;font-size:12.2px;font-weight:400;color:#337ab7;transform:scaleX(0.9738);-webkit-text-stroke:0">Мөнхтуяа Дархан хот</div>
<div class="t" id="t28" style="left:241.00px;top:256.70px;font-size:12.2px;font-weight:400;color:#4c4c4c;transform:scaleX(0.9573);-webkit-text-stroke:0">Дархан хот</div>
<div class="t" id="t29" style="left:239.99px;top:288.61px;font-size:12.2px;font-weight:400;color:#4c4c4c;transform:scaleX(1.0053);-webkit-text-stroke:0">Монгол</div>
<div class="t" id="t30" style="left:707.50px;top:245.11px;font-size:11.8px;font-weight:700;color:#555;transform:scaleX(0.9406);-webkit-text-stroke:0">Баталгаажилтын</div>
<div class="t" id="t31" style="left:707.50px;top:260.91px;font-size:11.8px;font-weight:700;color:#555;transform:scaleX(0.9119);-webkit-text-stroke:0">Огноо</div>
<div class="t" id="t32" style="left:707.50px;top:277.00px;font-size:11.8px;font-weight:700;color:#555;transform:scaleX(0.9538);-webkit-text-stroke:0">Үнийн жагсаалт</div>
<div class="t" id="t33" style="left:707.50px;top:301.61px;font-size:11.8px;font-weight:700;color:#555;transform:scaleX(0.9188);-webkit-text-stroke:0">Төлбөрийн Нөхцөл</div>
<div class="t" id="t34" style="left:851.00px;top:244.81px;font-size:12.2px;font-weight:400;color:#4c4c4c;transform:scaleX(0.9348);-webkit-text-stroke:0">2019-04-24 17:15:58</div>
<div class="t" id="t35" style="left:850.02px;top:276.70px;font-size:12.2px;font-weight:400;color:#337ab7;transform:scaleX(0.9756);-webkit-text-stroke:0">Нэрлэсэн үнэ (MNT)</div>
<div class="t" id="t36" style="left:111.90px;top:352.71px;font-size:13.0px;font-weight:400;color:#666;transform:scaleX(0.9058);-webkit-text-stroke:0">Захиалгын мөрүүд</div>
<div class="t" id="t37" style="left:244.88px;top:352.71px;font-size:13.0px;font-weight:400;color:#337ab7;transform:scaleX(0.9219);-webkit-text-stroke:0">Бусад мэдээлэл</div>
<div class="t" id="t38" style="left:113.80px;top:385.00px;font-size:11.8px;font-weight:700;color:#555;transform:scaleX(0.9049);-webkit-text-stroke:0">Бараа</div>
<div class="t" id="t39" style="left:288.50px;top:385.00px;font-size:11.8px;font-weight:700;color:#555;transform:scaleX(0.9078);-webkit-text-stroke:0">Тайлбар</div>
<div class="t" id="t40" style="left:463.00px;top:385.00px;font-size:11.8px;font-weight:700;color:#555;transform:scaleX(0.9416);-webkit-text-stroke:0">Захиалсан Тоо хэмжээ</div>
<div class="t" id="t41" style="left:695.70px;top:385.00px;font-size:11.8px;font-weight:700;color:#555;transform:scaleX(0.9440);-webkit-text-stroke:0">Хүргэгдсэн</div>
<div class="t" id="t42" style="left:817.00px;top:385.00px;font-size:11.8px;font-weight:700;color:#555;transform:scaleX(0.9622);-webkit-text-stroke:0">Нэхэмжилсэн</div>
<div class="t" id="t43" style="left:964.80px;top:385.00px;font-size:11.8px;font-weight:700;color:#555;transform:scaleX(0.9469);-webkit-text-stroke:0">Нэгж үнэ</div>
<div class="t" id="t44" style="left:1080.00px;top:385.00px;font-size:11.8px;font-weight:700;color:#555;transform:scaleX(0.9296);-webkit-text-stroke:0">Татвар</div>
<div class="t" id="t45" style="left:1189.80px;top:385.00px;font-size:11.8px;font-weight:700;color:#555;transform:scaleX(0.9511);-webkit-text-stroke:0">Дэд дүн</div>
<div class="t" id="t46" style="left:113.80px;top:408.11px;font-size:12.5px;font-weight:400;color:#337ab7;transform:scaleX(0.9303);-webkit-text-stroke:0">[1206] Сэт ширээ</div>
<div class="t" id="t47" style="left:288.50px;top:408.11px;font-size:12.5px;font-weight:400;color:#337ab7;transform:scaleX(0.9303);-webkit-text-stroke:0">[1206] Сэт ширээ</div>
<div class="t" id="t48" style="left:657.60px;top:408.11px;font-size:12.5px;font-weight:400;color:#337ab7;transform:scaleX(0.9129);-webkit-text-stroke:0">2.000</div>
<div class="t" id="t49" style="left:778.60px;top:408.11px;font-size:12.5px;font-weight:400;color:#337ab7;transform:scaleX(0.9097);-webkit-text-stroke:0">0.000</div>
<div class="t" id="t50" style="left:926.70px;top:408.11px;font-size:12.5px;font-weight:400;color:#337ab7;transform:scaleX(0.9097);-webkit-text-stroke:0">0.000</div>
<div class="t" id="t51" style="left:1013.00px;top:408.11px;font-size:12.5px;font-weight:400;color:#337ab7;transform:scaleX(0.9184);-webkit-text-stroke:0">260,000.00</div>
<div class="t" id="t52" style="left:1079.11px;top:408.11px;font-size:12.5px;font-weight:400;color:#337ab7;transform:scaleX(0.8884);-webkit-text-stroke:0">НӨАТ 10%</div>
<div class="t" id="t53" style="left:1245.60px;top:408.11px;font-size:12.5px;font-weight:400;color:#337ab7;transform:scaleX(0.9253);-webkit-text-stroke:0">472,727.27 ₮</div>
<div class="t" id="t54" style="left:1132.20px;top:522.31px;font-size:12.3px;font-weight:700;color:#555;transform:scaleX(0.8902);-webkit-text-stroke:0">Татваргүй дүн :</div>
<div class="t" id="t55" style="left:1253.50px;top:522.31px;font-size:12.3px;font-weight:400;color:#4c4c4c;transform:scaleX(0.9303);-webkit-text-stroke:0">472,727.27₮</div>
<div class="t" id="t56" style="left:1172.60px;top:543.12px;font-size:12.3px;font-weight:700;color:#555;transform:scaleX(0.8833);-webkit-text-stroke:0">Татвар :</div>
<div class="t" id="t57" style="left:1260.20px;top:543.12px;font-size:12.3px;font-weight:400;color:#4c4c4c;transform:scaleX(0.9250);-webkit-text-stroke:0">47,272.73₮</div>
<div class="t" id="t58" style="left:1182.30px;top:567.70px;font-size:12.3px;font-weight:700;color:#555;transform:scaleX(0.9029);-webkit-text-stroke:0">Нийт :</div>
<div class="t" id="t59" style="left:1234.20px;top:564.71px;font-size:15.0px;font-weight:700;color:#555;transform:scaleX(0.9991);-webkit-text-stroke:0">520,000.00₮</div>
</body></html>
